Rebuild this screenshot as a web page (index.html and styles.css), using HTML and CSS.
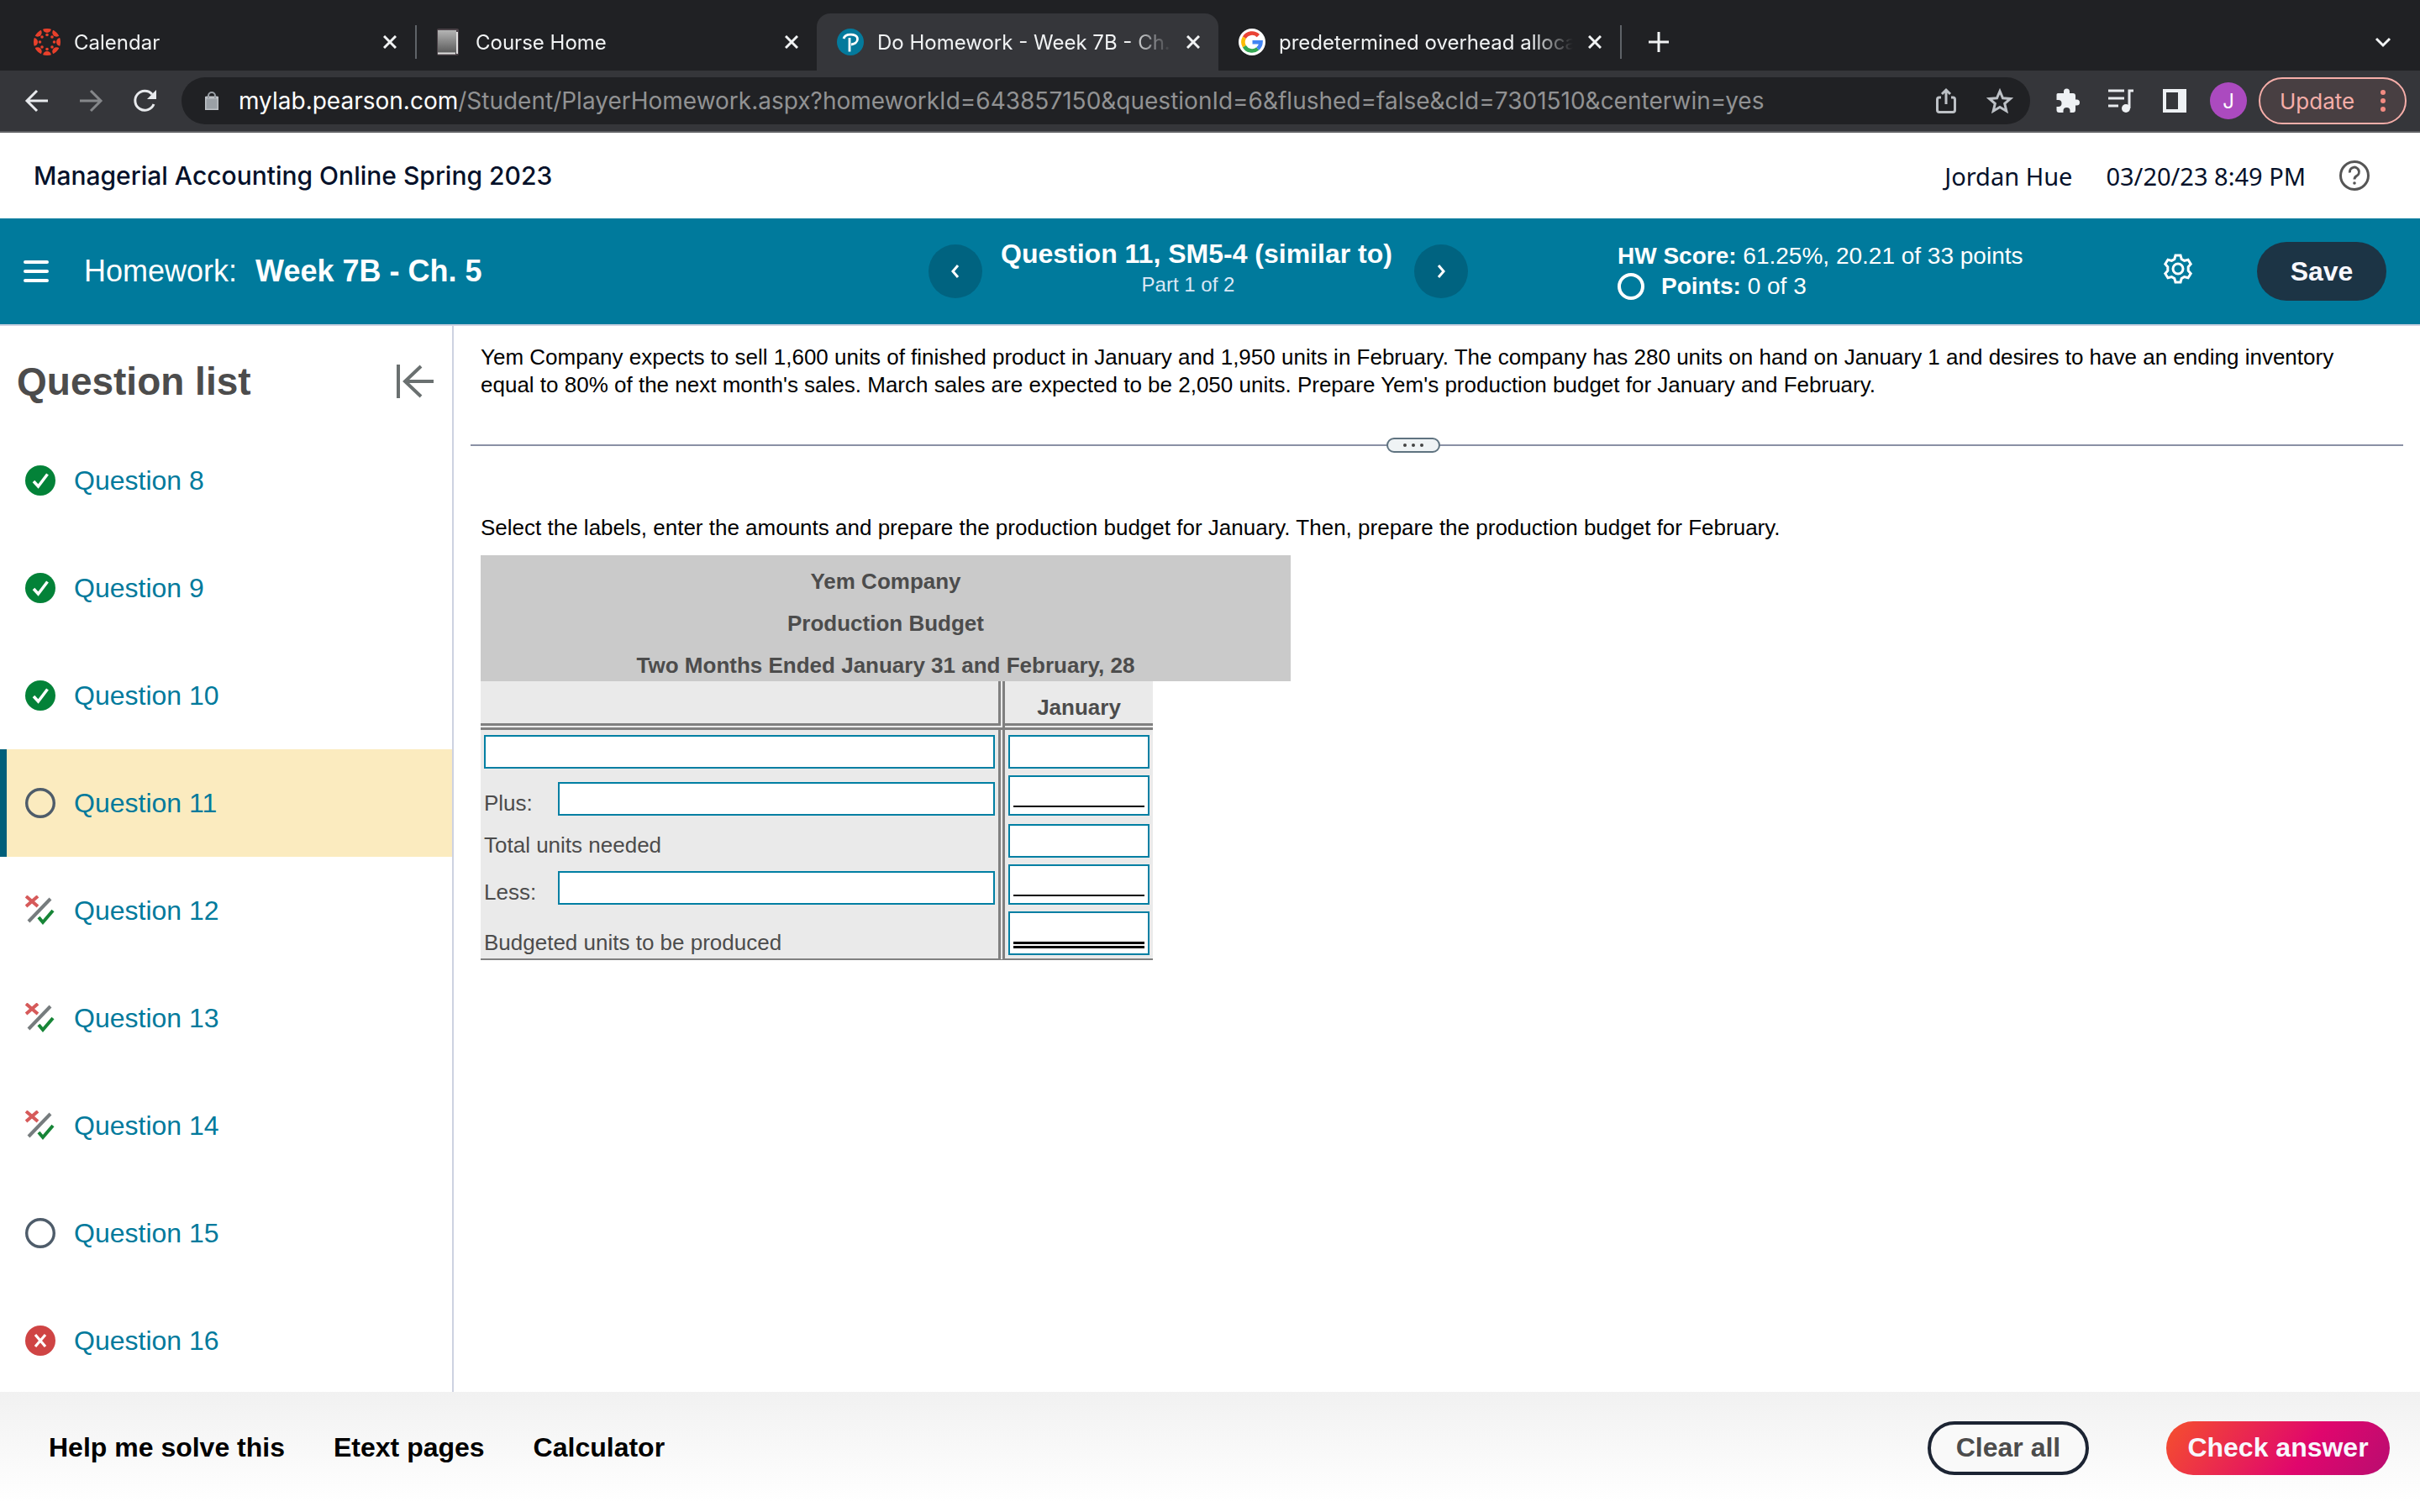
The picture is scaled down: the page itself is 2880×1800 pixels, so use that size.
FILE: index.html
```html
<!DOCTYPE html>
<html lang="en">
<head>
    <meta charset="UTF-8">
    <meta name="viewport" content="width=device-width, initial-scale=1.0">
    <title>Do Homework - Week 7B - Ch. 5</title>
    <link rel="stylesheet" href="styles.css">
</head>
<body>
    <!-- Browser tabs -->
    <div class="tab-strip">
        <div class="tab">
            <svg class="favicon" viewBox="0 0 32 32">
                <defs><clipPath id="disc"><circle cx="16" cy="16" r="16"/></clipPath></defs>
                <g fill="#e8402b" clip-path="url(#disc)">
                    <circle cx="16" cy="0" r="5"/><circle cx="27.300" cy="4.700" r="5"/><circle cx="32" cy="16" r="5"/><circle cx="27.300" cy="27.300" r="5"/>
                    <circle cx="16" cy="32" r="5"/><circle cx="4.700" cy="27.300" r="5"/><circle cx="0" cy="16" r="5"/><circle cx="4.700" cy="4.700" r="5"/>
                    <circle cx="16" cy="7.500" r="1.800"/><circle cx="22" cy="10" r="1.800"/><circle cx="24.500" cy="16" r="1.800"/><circle cx="22" cy="22" r="1.800"/>
                    <circle cx="16" cy="24.500" r="1.800"/><circle cx="10" cy="22" r="1.800"/><circle cx="7.500" cy="16" r="1.800"/><circle cx="10" cy="10" r="1.800"/>
                </g>
            </svg>
            <span class="tab-title">Calendar</span>
            <button class="tab-close" aria-label="Close tab"><svg viewBox="0 0 16 16"><path d="M1 1L15 15M15 1L1 15"/></svg></button>
        </div>
        <div class="tab tab-divided">
            <svg class="favicon" viewBox="0 0 32 32">
                <defs><linearGradient id="book" x1="0" y1="0" x2="0" y2="1"><stop offset="0" stop-color="#b5b5b5"/><stop offset="1" stop-color="#5a5a5a"/></linearGradient></defs>
                <rect x="2" y="0" width="26" height="32" rx="2" fill="#4a4147"/>
                <rect x="3" y="2" width="22" height="27" fill="url(#book)"/>
                <path d="M3 29.500H24M26 4V30" stroke="#e0e0e0" stroke-width="2"/>
            </svg>
            <span class="tab-title">Course Home</span>
            <button class="tab-close" aria-label="Close tab"><svg viewBox="0 0 16 16"><path d="M1 1L15 15M15 1L1 15"/></svg></button>
        </div>
        <div class="tab tab-active">
            <svg class="favicon" viewBox="0 0 32 32">
                <circle cx="16" cy="16" r="16" fill="#047a9c"/>
                <path d="M8 12C9 8.500 13 7 17 7.200C22 7.500 24.500 9.500 24.500 12.500C24.500 16 21 18.500 17 19M15 11V27.500" fill="none" stroke="#fff" stroke-width="2.800"/>
            </svg>
            <span class="tab-title">Do Homework - Week 7B - Ch. 5</span>
            <button class="tab-close" aria-label="Close tab"><svg viewBox="0 0 16 16"><path d="M1 1L15 15M15 1L1 15"/></svg></button>
        </div>
        <div class="tab">
            <svg class="favicon" viewBox="0 0 32 32">
                <circle cx="16" cy="16" r="16" fill="#fff"/>
                <g fill="none" stroke-width="4.600">
                    <path d="M23.400 8.600A10.500 10.500 0 0 0 6.900 10.750" stroke="#ea4335"/>
                    <path d="M6.900 10.750A10.500 10.500 0 0 0 6.900 21.250" stroke="#fbbc05"/>
                    <path d="M6.900 21.250A10.500 10.500 0 0 0 22.750 24.040" stroke="#34a853"/>
                    <path d="M22.750 24.040A10.500 10.500 0 0 0 26.500 16.300H16.500" stroke="#4285f4"/>
                </g>
            </svg>
            <span class="tab-title">predetermined overhead allocation</span>
            <button class="tab-close" aria-label="Close tab"><svg viewBox="0 0 16 16"><path d="M1 1L15 15M15 1L1 15"/></svg></button>
        </div>
        <button class="new-tab" aria-label="New tab"><svg viewBox="0 0 24 24"><path d="M12 0V24M0 12H24"/></svg></button>
        <button class="tab-search" aria-label="Search tabs"><svg viewBox="0 0 20 20"><path d="M2 6L10 14L18 6"/></svg></button>
    </div>

    <!-- Address bar -->
    <div class="toolbar">
        <div class="nav-buttons">
            <button aria-label="Back"><svg viewBox="0 0 32 32"><path d="M29 16H5M16 4L4 16L16 28"/></svg></button>
            <button class="dim" aria-label="Forward"><svg viewBox="0 0 32 32"><path d="M3 16H27M16 4L28 16L16 28"/></svg></button>
            <button aria-label="Reload"><svg viewBox="0 0 32 32"><path d="M27 20A11.500 11.500 0 1 1 25 8.200"/><path d="M30 3V14H19Z" fill="#e8eaed" stroke="none"/></svg></button>
        </div>
        <div class="omnibox">
            <svg class="lock" viewBox="0 0 16 22"><rect y="7" width="16" height="15" rx="2" fill="#9aa0a6"/><path d="M4 8V5A4 4 0 0 1 12 5V8" fill="none" stroke="#9aa0a6" stroke-width="2"/></svg>
            <a class="url" href="#"><span class="host">mylab.pearson.com</span>/Student/PlayerHomework.aspx?homeworkId=643857150&amp;questionId=6&amp;flushed=false&amp;cId=7301510&amp;centerwin=yes</a>
            <button aria-label="Share"><svg viewBox="0 0 32 32"><path d="M10 12H8A2.500 2.500 0 0 0 5.500 14.500V27A2.500 2.500 0 0 0 8 29.500H24A2.500 2.500 0 0 0 26.500 27V14.500A2.500 2.500 0 0 0 24 12H22M16 20V4M11 8L16 3L21 8"/></svg></button>
            <button aria-label="Bookmark"><svg viewBox="0 0 32 32"><path d="M16 4.500L19.500 12.800L28.500 13.500L21.700 19.400L23.800 28.200L16 23.500L8.200 28.200L10.300 19.400L3.500 13.500L12.500 12.800Z"/></svg></button>
        </div>
        <div class="extensions">
            <button aria-label="Extensions"><svg viewBox="0 0 32 32"><path fill="#eef1f4" stroke="none" d="M5 7H12V5A3.500 3.500 0 0 1 19 5V7H23A3 3 0 0 1 26 10V14.500H27.500A3.500 3.500 0 0 1 27.500 21.500H26V27A3 3 0 0 1 23 30H19.500V28A4 4 0 0 0 11.500 28V30H6.500A3 3 0 0 1 3.500 27V23H5.500A4 4 0 0 0 5.500 15H3.500V8.500A1.500 1.500 0 0 1 5 7Z"/></svg></button>
            <button aria-label="Media control"><svg viewBox="0 0 32 32"><path d="M1 4H20M1 13H20M1 22H13M31 4H26V25"/><circle cx="22" cy="25" r="5" fill="#eef1f4" stroke="none"/></svg></button>
            <button aria-label="Side panel"><svg viewBox="0 0 32 32"><path fill="#eef1f4" stroke="none" fill-rule="evenodd" d="M2 2H30V30H2ZM6 6V26H20V6Z"/></svg></button>
            <button class="avatar" aria-label="Profile">J</button>
            <button class="update">Update <svg viewBox="0 0 6 28"><circle cx="3" cy="4" r="3"/><circle cx="3" cy="14" r="3"/><circle cx="3" cy="24" r="3"/></svg></button>
        </div>
    </div>

    <header class="course-bar">
        <h1>Managerial Accounting Online Spring 2023</h1>
        <span>Jordan Hue</span>
        <span>03/20/23 8:49 PM</span>
        <button aria-label="Help"><svg viewBox="0 0 36 36"><circle cx="18" cy="18" r="16.500"/><path d="M12.500 14.500A5.500 5.500 0 1 1 20.500 18.500C18.500 19.800 18 20.500 18 22.500"/><circle cx="18" cy="27" r="1.800" fill="#555" stroke="none"/></svg></button>
    </header>

    <div class="homework-bar">
        <div class="homework-name">
            <button aria-label="Menu"><svg viewBox="0 0 30 26"><path d="M2 2H28M2 13H28M2 24H28"/></svg></button>
            <h2>Homework: <strong>Week 7B - Ch. 5</strong></h2>
        </div>
        <div class="question-nav">
            <button aria-label="Previous question"><svg viewBox="0 0 16 16"><path d="M11 1L5 8L11 15"/></svg></button>
            <div class="question-name">
                <h3>Question 11, SM5-4 (similar to)</h3>
                <p>Part 1 of 2</p>
            </div>
            <button aria-label="Next question"><svg viewBox="0 0 16 16"><path d="M5 1L11 8L5 15"/></svg></button>
        </div>
        <div class="score">
            <div>
                <p><strong>HW Score:</strong> 61.25%, 20.21 of 33 points</p>
                <p class="points"><span class="ring"></span><span><strong>Points:</strong> 0 of 3</span></p>
            </div>
            <button class="settings" aria-label="Settings"><svg viewBox="0 0 36 36"><path d="M15 2H21L22.200 6.500L25.500 8.400L30 7.200L33.200 12.300L30.200 15.800V20.200L33.200 23.700L30 28.800L25.500 27.600L22.200 29.500L21 34H15L13.800 29.500L10.500 27.600L6 28.800L2.800 23.700L5.800 20.200V15.800L2.800 12.300L6 7.200L10.500 8.400L13.800 6.500Z"/><circle cx="18" cy="18" r="6"/></svg></button>
            <button class="save">Save</button>
        </div>
    </div>

    <div class="main">
        <nav class="sidebar">
            <div class="sidebar-head">
                <h2>Question list</h2>
                <button aria-label="Collapse list"><svg viewBox="0 0 44 40"><path d="M2 0V40M44 20H10M29 2L10 20L29 38"/></svg></button>
            </div>
            <ul>
                <li><a href="#"><svg viewBox="0 0 36 36"><use href="#icon-correct"/></svg>Question 8</a></li>
                <li><a href="#"><svg viewBox="0 0 36 36"><use href="#icon-correct"/></svg>Question 9</a></li>
                <li><a href="#"><svg viewBox="0 0 36 36"><use href="#icon-correct"/></svg>Question 10</a></li>
                <li class="current"><a href="#"><svg viewBox="0 0 36 36"><use href="#icon-open"/></svg>Question 11</a></li>
                <li><a href="#"><svg viewBox="0 0 36 36"><use href="#icon-partial"/></svg>Question 12</a></li>
                <li><a href="#"><svg viewBox="0 0 36 36"><use href="#icon-partial"/></svg>Question 13</a></li>
                <li><a href="#"><svg viewBox="0 0 36 36"><use href="#icon-partial"/></svg>Question 14</a></li>
                <li><a href="#"><svg viewBox="0 0 36 36"><use href="#icon-open"/></svg>Question 15</a></li>
                <li><a href="#"><svg viewBox="0 0 36 36"><use href="#icon-wrong"/></svg>Question 16</a></li>
            </ul>
        </nav>

        <main class="content">
            <p class="problem">Yem Company expects to sell 1,600 units of finished product in January and 1,950 units in February. The company has 280 units on hand on January 1 and desires to have an ending inventory equal to 80% of the next month's sales. March sales are expected to be 2,050 units. Prepare Yem's production budget for January and February.</p>
            <div class="splitter">
                <button aria-label="Resize"><svg viewBox="0 0 24 4"><circle cx="2" cy="2" r="2"/><circle cx="12" cy="2" r="2"/><circle cx="22" cy="2" r="2"/></svg></button>
            </div>
            <p class="instructions">Select the labels, enter the amounts and prepare the production budget for January. Then, prepare the production budget for February.</p>

            <table class="budget">
                <colgroup><col class="col-label"><col class="col-amount"><col></colgroup>
                <thead>
                    <tr class="title"><th colspan="3">Yem Company</th></tr>
                    <tr class="title"><th colspan="3">Production Budget</th></tr>
                    <tr class="title"><th colspan="3">Two Months Ended January 31 and February, 28</th></tr>
                    <tr class="months"><th class="label"></th><th>January</th></tr>
                </thead>
                <tbody>
                    <tr>
                        <td class="label"><div class="box"><input type="text" aria-label="First label"></div></td>
                        <td><div class="box"><input type="text" aria-label="First amount"></div></td>
                    </tr>
                    <tr>
                        <td class="label"><div class="pair"><label for="plus">Plus:</label><div class="box"><input type="text" id="plus"></div></div></td>
                        <td><div class="box single"><input type="text" aria-label="Plus amount"></div></td>
                    </tr>
                    <tr>
                        <td class="label"><label for="total">Total units needed</label></td>
                        <td><div class="box"><input type="text" id="total"></div></td>
                    </tr>
                    <tr>
                        <td class="label"><div class="pair"><label for="less">Less:</label><div class="box"><input type="text" id="less"></div></div></td>
                        <td><div class="box single"><input type="text" aria-label="Less amount"></div></td>
                    </tr>
                    <tr class="last">
                        <td class="label"><label for="produced">Budgeted units to be produced</label></td>
                        <td><div class="box double"><input type="text" id="produced"></div></td>
                    </tr>
                </tbody>
            </table>
        </main>
    </div>

    <footer class="actions">
        <a href="#">Help me solve this</a>
        <a href="#">Etext pages</a>
        <a href="#">Calculator</a>
        <button class="clear">Clear all</button>
        <button class="check">Check answer</button>
    </footer>

    <svg class="sprite">
        <symbol id="icon-correct" viewBox="0 0 36 36"><circle cx="18" cy="18" r="18" fill="#038238"/><path d="M10 19L15.500 25L26.500 10.500" fill="none" stroke="#fff" stroke-width="3.500"/></symbol>
        <symbol id="icon-open" viewBox="0 0 36 36"><circle cx="18" cy="18" r="16.300" fill="none" stroke="#4e5c6a" stroke-width="3.400"/></symbol>
        <symbol id="icon-wrong" viewBox="0 0 36 36"><circle cx="18" cy="18" r="18" fill="#cf4444"/><path d="M12 11L24 25M24 11L12 25" fill="none" stroke="#fff" stroke-width="3.200"/></symbol>
        <symbol id="icon-partial" viewBox="0 0 36 36"><g fill="none"><path d="M1 1L15 13M15 1L1 13" stroke="#d65a5a" stroke-width="4"/><path d="M30 4L4 31" stroke="#767c7e" stroke-width="4"/><path d="M16 26L21 32L33 18" stroke="#178537" stroke-width="4"/></g></symbol>
    </svg>
</body>
</html>
```

FILE: styles.css
```css
* {
    box-sizing: border-box;
}
body {
    margin: 0;
    height: 100vh;
    display: flex;
    flex-direction: column;
    overflow: hidden;
    font-family: "Liberation Sans", Arial, sans-serif;
    font-size: 26px;
    color: #000;
    background-color: #fff;
}
h1, h2, h3, p, ul {
    margin: 0;
    padding: 0;
}
button {
    padding: 0;
    border: none;
    background: none;
    font-family: inherit;
    cursor: pointer;
}
a {
    text-decoration: none;
}
svg {
    display: block;
}
.sprite {
    display: none;
}

/* browser */
.tab-strip {
    display: flex;
    height: 84px;
    padding: 16px 34px 0 16px;
    background-color: #202124;
    color: #f1f3f4;
    font-family: Inter, sans-serif;
    font-size: 24px;
}
.tab-strip button svg {
    fill: none;
    stroke: #f1f3f4;
    stroke-width: 3;
}
.tab {
    display: flex;
    align-items: center;
    flex: 0 1 478px;
    min-width: 0;
    padding: 0 22px 0 24px;
}
.tab-divided {
    background: linear-gradient(#5f6368, #5f6368) left center / 2px 40px no-repeat;
}
.tab-active {
    border-radius: 16px 16px 0 0;
    background-color: #35363a;
}
.favicon {
    width: 32px;
    height: 32px;
    flex: none;
    margin-right: 16px;
}
.tab-title {
    flex: 1;
    min-width: 0;
    margin-right: 18px;
    overflow: hidden;
    white-space: nowrap;
    mask-image: linear-gradient(to right, #000 86%, transparent);
}
.tab-close svg {
    width: 16px;
    height: 16px;
}
.new-tab {
    padding-left: 34px;
    background: linear-gradient(#5f6368, #5f6368) left center / 2px 40px no-repeat;
}
.new-tab svg {
    width: 24px;
    height: 24px;
}
.tab-search {
    margin-left: auto;
}
.tab-search svg {
    width: 20px;
    height: 20px;
}
.toolbar {
    display: flex;
    height: 74px;
    padding: 8px 16px 8px 28px;
    border-bottom: 2px solid #5f6063;
    background-color: #35363a;
    font-family: Inter, sans-serif;
}
.toolbar svg {
    width: 32px;
    height: 32px;
    fill: none;
    stroke: #e8eaed;
    stroke-width: 3;
}
.nav-buttons {
    display: flex;
    gap: 32px;
    margin-right: 28px;
}
.nav-buttons .dim svg {
    stroke: #85878a;
}
.omnibox {
    flex: 1;
    display: flex;
    align-items: center;
    gap: 32px;
    padding: 0 20px 0 28px;
    border-radius: 28px;
    background-color: #202124;
}
.omnibox svg {
    stroke: #bdc1c6;
}
.omnibox .lock {
    width: 16px;
    height: 22px;
    margin-right: -8px;
}
.url {
    flex: 1;
    color: #919293;
    font-size: 28px;
    white-space: nowrap;
}
.host {
    color: #fff;
}
.extensions {
    display: flex;
    align-items: center;
    gap: 32px;
    margin-left: 28px;
}
.extensions .avatar {
    width: 44px;
    height: 44px;
    margin: 0 -18px 0 -6px;
    border-radius: 50%;
    background-color: #ab4abf;
    color: #fff;
    font-size: 24px;
}
.update {
    display: flex;
    align-items: center;
    justify-content: space-between;
    width: 176px;
    height: 56px;
    padding: 0 23px;
    border: 2px solid #f6aea9;
    border-radius: 28px;
    background-color: #483f42;
    color: #f6aea9;
    font-size: 26px;
}
.extensions .update svg {
    width: 6px;
    height: 28px;
    fill: #f28b82;
    stroke: none;
}

/* course header */
.course-bar {
    display: flex;
    align-items: center;
    gap: 40px;
    height: 102px;
    padding: 0 60px 0 40px;
    color: #05112a;
    font-family: "Noto Sans", sans-serif;
    font-size: 29px;
}
.course-bar h1 {
    flex: 1;
    font-family: Inter, sans-serif;
    font-size: 30px;
    font-weight: 500;
}
.course-bar svg {
    width: 36px;
    height: 36px;
    fill: none;
    stroke: #555;
    stroke-width: 3;
}
.homework-bar {
    display: grid;
    grid-template-columns: 1105fr 820fr 955fr;
    align-items: center;
    height: 128px;
    border-bottom: 2px solid #cdd2e1;
    background-color: #007a9c;
    color: #fff;
}
.homework-bar svg {
    fill: none;
    stroke: #fff;
    stroke-width: 3;
}
.homework-name {
    display: flex;
    align-items: center;
    gap: 42px;
    padding-left: 28px;
}
.homework-name svg {
    width: 30px;
    height: 26px;
    stroke-width: 4;
    stroke-linecap: round;
}
.homework-name h2 {
    font-size: 36px;
    font-weight: normal;
}
.homework-name strong {
    margin-left: 12px;
}
.question-nav {
    display: flex;
    align-items: center;
    gap: 22px;
}
.question-nav button {
    display: flex;
    align-items: center;
    justify-content: center;
    width: 64px;
    height: 64px;
    border-radius: 50%;
    background-color: #006380;
}
.question-nav svg {
    width: 16px;
    height: 16px;
}
.question-name {
    padding: 0 4px 8px 0;
    text-align: center;
}
.question-name h3 {
    font-size: 32px;
    line-height: 40px;
}
.question-name p {
    padding-right: 20px;
    color: #dbe8f6;
    font-size: 24px;
    line-height: 34px;
}
.score {
    display: flex;
    align-items: center;
    padding-right: 40px;
    font-size: 28px;
    line-height: 36px;
}
.points {
    display: flex;
    align-items: center;
    gap: 20px;
}
.ring {
    width: 32px;
    height: 32px;
    border: 4px solid #fff;
    border-radius: 50%;
}
.settings {
    margin-left: auto;
    padding-bottom: 6px;
}
.settings svg {
    width: 36px;
    height: 36px;
}
.save {
    width: 154px;
    height: 70px;
    margin-left: 76px;
    border-radius: 35px;
    background-color: #1c3445;
    color: #f8f8ff;
    font-size: 32px;
    font-weight: bold;
}

/* main area */
.main {
    flex: 1;
    min-height: 0;
    display: flex;
}
.sidebar {
    width: 540px;
    flex: none;
    overflow: hidden;
    border-right: 2px solid #cdd2e1;
}
.sidebar-head {
    display: flex;
    align-items: center;
    justify-content: space-between;
    height: 120px;
    padding: 12px 22px 0 20px;
}
.sidebar-head h2 {
    color: #4c4c4c;
    font-size: 46px;
}
.sidebar-head svg {
    width: 44px;
    height: 40px;
    fill: none;
    stroke: #6a7070;
    stroke-width: 4;
}
.sidebar ul {
    list-style: none;
}
.sidebar li {
    height: 128px;
    border-left: 8px solid transparent;
}
.sidebar .current {
    border-left-color: #005f7a;
    background-color: #fbebbf;
}
.sidebar a {
    display: flex;
    align-items: center;
    gap: 22px;
    height: 100%;
    padding-left: 22px;
    color: #007a9c;
    font-size: 32px;
}
.sidebar a svg {
    width: 36px;
    height: 36px;
}
.content {
    flex: 1;
    padding: 21px 20px 0;
}
.problem, .instructions {
    padding: 0 60px 0 12px;
    line-height: 33px;
}
.splitter {
    display: flex;
    justify-content: center;
    margin: 46px 0 73px;
    padding-right: 56px;
    background: linear-gradient(#8a90a5, #8a90a5) center / 100% 2px no-repeat;
}
.splitter button {
    display: flex;
    align-items: center;
    justify-content: center;
    width: 64px;
    height: 18px;
    border: 2px solid #5f7380;
    border-radius: 9px;
    background-color: #eff3f5;
}
.splitter svg {
    width: 24px;
    height: 4px;
    fill: #444;
}

/* budget table */
.budget {
    width: 964px;
    margin: 16px 0 0 12px;
    table-layout: fixed;
    border-collapse: separate;
    border-spacing: 0;
    color: #4c4c4c;
    line-height: 30px;
}
.col-label {
    width: 624px;
}
.col-amount {
    width: 176px;
}
.budget th, .budget td {
    padding: 4px;
    background-color: #eaeaea;
    text-align: left;
    vertical-align: bottom;
}
.budget th {
    height: 50px;
    text-align: center;
}
.budget .title th {
    background-color: #cacaca;
}
.budget .months th {
    height: 58px;
    border-bottom: 8px double #808080;
}
.budget .label {
    border-right: 8px double #808080;
}
.budget tbody td {
    height: 50px;
}
.budget .last td {
    border-bottom: 2px solid #808080;
}
.pair {
    display: grid;
    grid-template-columns: 88px 1fr;
    align-items: end;
}
.box {
    border: 2px solid #007fa3;
    background-color: #fff;
}
.box input {
    display: block;
    width: 100%;
    height: 36px;
    padding: 0 4px;
    border: none;
    background: none;
    font: inherit;
}
.box.single {
    padding: 0 4px 8px;
}
.box.single input {
    border-bottom: 2px solid #000;
}
.box.double {
    padding: 0 4px 6px;
}
.box.double input {
    height: 42px;
    border-bottom: 8px double #000;
}

/* bottom bar */
.actions {
    display: flex;
    align-items: center;
    gap: 58px;
    height: 143px;
    padding: 0 36px 10px 58px;
    background: linear-gradient(#f1f1f1, #fff 92%);
    font-size: 32px;
    font-weight: bold;
}
.actions a {
    color: #000;
}
.actions button {
    height: 64px;
    border-radius: 32px;
    font-size: 32px;
    font-weight: bold;
}
.actions .clear {
    width: 192px;
    margin-left: auto;
    border: 4px solid #1c2433;
    background-color: #f9f9f9;
    color: #4c4c4c;
}
.actions .check {
    width: 266px;
    margin-left: 34px;
    background: linear-gradient(125deg, #f5502d, #e0066d 62%, #b80d70);
    color: #f8f8ff;
}
```
